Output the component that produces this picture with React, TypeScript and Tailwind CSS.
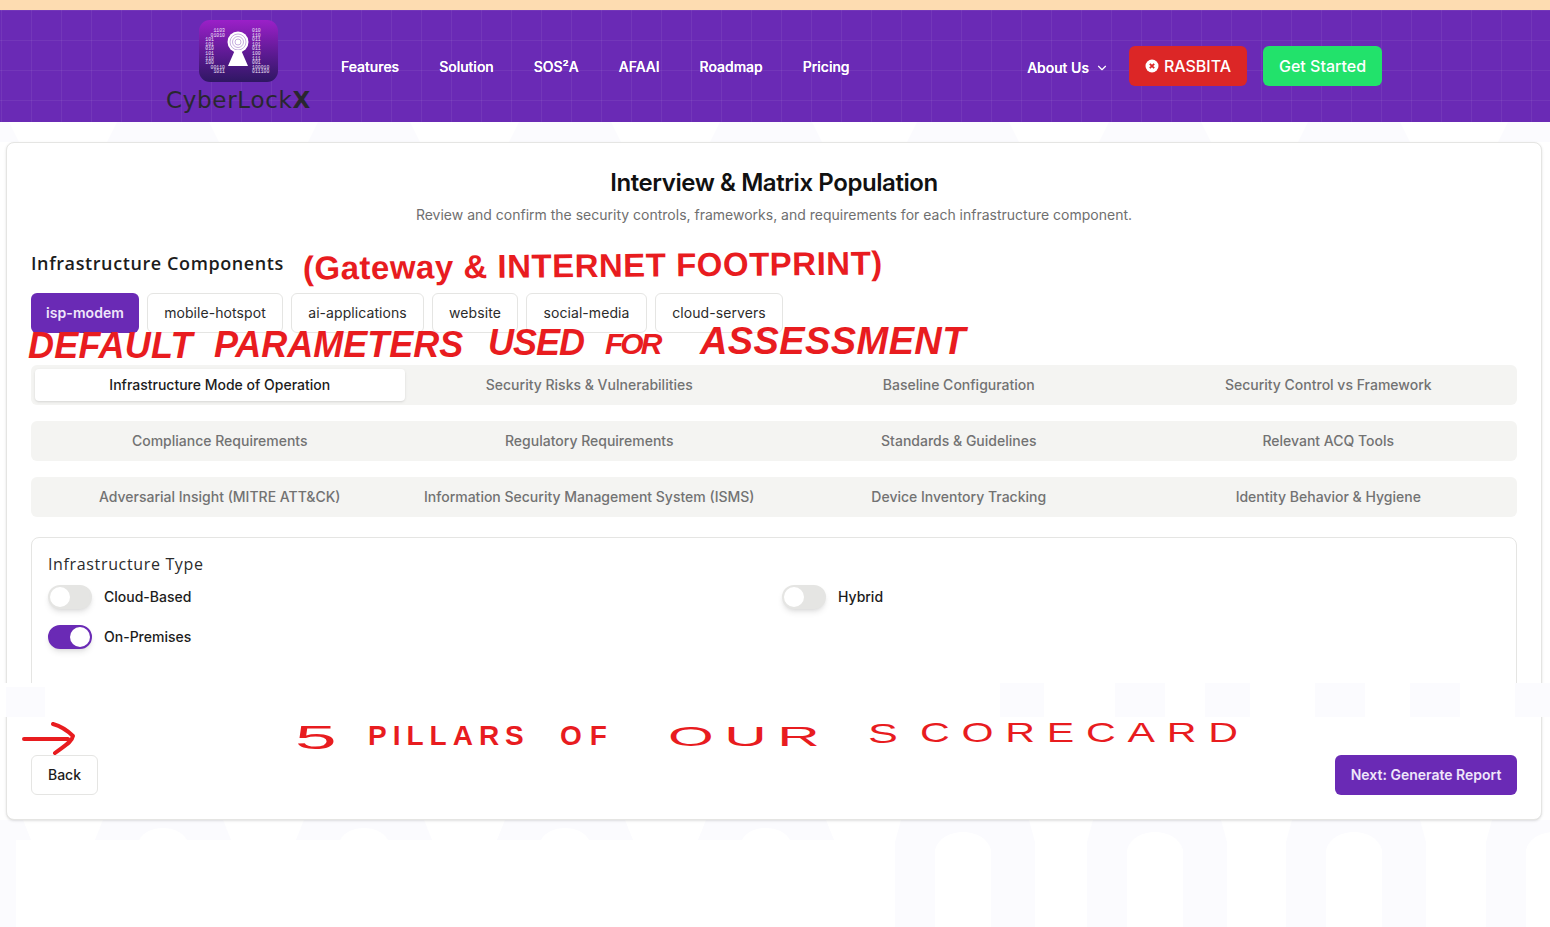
import React from 'react';
import { ChevronDown } from 'lucide-react';

const navLinks = ['Features', 'Solution', 'SOS²A', 'AFAAI', 'Roadmap', 'Pricing'];
const components = [
  { name: 'isp-modem', width: 'w-[108px]' },
  { name: 'mobile-hotspot', width: 'w-[136px]' },
  { name: 'ai-applications', width: 'w-[133px]' },
  { name: 'website', width: 'w-[86px]' },
  { name: 'social-media', width: 'w-[121px]' },
  { name: 'cloud-servers', width: 'w-[128px]' },
];
const tabRows = [
  ['Infrastructure Mode of Operation', 'Security Risks & Vulnerabilities', 'Baseline Configuration', 'Security Control vs Framework'],
  ['Compliance Requirements', 'Regulatory Requirements', 'Standards & Guidelines', 'Relevant ACQ Tools'],
  ['Adversarial Insight (MITRE ATT&CK)', 'Information Security Management System (ISMS)', 'Device Inventory Tracking', 'Identity Behavior & Hygiene'],
];

const binaryLeft = ['1103', '01010', '101', '101', '010', '101', '110', '100', '00110', '1011'];
const binaryRight = ['010', '110', '011', '101', '011', '100', '111', '001', '100010', '011100'];

function Logo() {
  return (
    <div className="flex flex-col items-center w-[143px] pt-[10px]">
      <svg width="81" height="62" viewBox="0 0 81 62" className="ml-[2px]">
        <defs>
          <linearGradient id="logoFill" x1="0" y1="0" x2="0" y2="1">
            <stop offset="0" stopColor="#9b20c8" />
            <stop offset="0.55" stopColor="#5c1a92" />
            <stop offset="1" stopColor="#2f1763" />
          </linearGradient>
        </defs>
        <rect width="79" height="62" rx="11" fill="url(#logoFill)" />
        {binaryLeft.map((row, i) => (
          <text
            key={i}
            x={i < 2 || i > 7 ? 26 : 15}
            y={12 + i * 4.6}
            textAnchor="end"
            fontSize="4.8"
            fill="#efe4f8"
            fontFamily="Liberation Mono, monospace"
          >
            {row}
          </text>
        ))}
        {binaryRight.map((row, i) => (
          <text key={i} x="53" y={12 + i * 4.6} fontSize="4.8" fill="#efe4f8" fontFamily="Liberation Mono, monospace">
            {row}
          </text>
        ))}
        <circle cx="39" cy="22" r="10.500" fill="#fff" />
        <circle cx="39" cy="22" r="8" fill="none" stroke="#b79ad6" strokeWidth="0.8" />
        <circle cx="39" cy="22" r="5.500" fill="none" stroke="#b79ad6" strokeWidth="0.8" />
        <circle cx="39" cy="22" r="3" fill="none" stroke="#b79ad6" strokeWidth="0.8" />
        <path d="M36 30 L42 30 L49 46 L29 46 Z" fill="#fff" />
      </svg>
      <div className="mt-[4px] font-['DejaVu_Sans',sans-serif] text-[23px] leading-[28px] tracking-[0.7px] text-[#29272f] whitespace-nowrap">
        CyberLock<span className="font-bold">X</span>
      </div>
    </div>
  );
}

function Switch({ on }: { on?: boolean }) {
  return (
    <span className={`flex items-center w-[44px] h-[24px] rounded-full border-2 shadow-md ${on ? 'bg-[#6a2ab5] border-[#6a2ab5] justify-end' : 'bg-[#e5e5e3] border-[#e5e5e3] justify-start'}`}>
      <span className="block w-[20px] h-[20px] rounded-full bg-white" />
    </span>
  );
}

function Backdrop() {
  const tops = [-105, 95, 296, 497, 698];
  const tall = [895, 1087, 1286, 1486];
  return (
    <svg className="absolute top-0 left-0 w-[1550px] h-[927px]" viewBox="0 0 1550 927">
      <g fill="#fbfbfe">
        {[...tops, ...tall].map((x) => (
          <path key={x} d={`M${x + 22} 122 L${x + 114} 122 L${x + 124} 142 L${x + 12} 142 Z`} />
        ))}
        {tops.map((x) => (
          <path key={x} d={`M${x + 8} 820 L${x + 128} 820 L${x + 136} 840 L${x + 92} 840 C${x + 84} 824 ${x + 52} 824 ${x + 44} 840 L${x} 840 Z`} />
        ))}
        {tall.map((x) => (
          <path key={x} d={`M${x + 6} 820 L${x + 134} 820 L${x + 140} 842 L${x + 140} 927 L${x + 96} 927 L${x + 96} 850 C${x + 90} 826 ${x + 46} 826 ${x + 40} 850 L${x + 40} 927 L${x} 927 L${x} 842 Z`} />
        ))}
        <rect x="0" y="840" width="16" height="87" />
      </g>
    </svg>
  );
}

export default function App() {
  return (
    <div className="relative min-h-[927px] bg-white overflow-hidden font-['Inter',sans-serif] text-[#1c1c1c]">
      <Backdrop />

      <div className="relative">
        <div className="h-[10px] bg-[#fddcb1]" />
        <header className="flex items-start h-[112px] pl-[167px] pr-[168px] bg-[#6a2ab5] bg-[linear-gradient(rgba(255,255,255,0.06)_1px,transparent_1px),linear-gradient(90deg,rgba(255,255,255,0.06)_1px,transparent_1px)] bg-[size:30px_30px] bg-[position:1px_0px]">
          <Logo />
          <nav className="flex items-center gap-10 ml-[31px] h-[114px] text-sm font-medium text-white [text-shadow:0_0_0.5px_#fff]">
            {navLinks.map((link) => (
              <a key={link}>{link}</a>
            ))}
          </nav>
          <div className="flex items-center ml-auto h-[112px]">
            <span className="flex items-center gap-[6px] mr-[20px] mt-[4px] text-sm font-medium text-white [text-shadow:0_0_0.5px_#fff]">
              About Us <ChevronDown size={14} />
            </span>
            <button className="flex items-center justify-center gap-[5px] w-[118px] h-[40px] rounded-md bg-[#dc2626] text-white font-medium">
              <svg width="14" height="14" viewBox="0 0 14 14">
                <circle cx="7" cy="7" r="6.500" fill="#fff" />
                <path d="M4.800 4.800 L9.200 9.200 M9.200 4.800 L4.800 9.200" stroke="#dc2626" strokeWidth="1.800" />
              </svg>
              RASBITA
            </button>
            <button className="ml-4 w-[119px] h-[40px] rounded-md bg-[#22e26b] text-white font-medium">Get Started</button>
          </div>
        </header>

        <main className="mt-5 ml-[6px] w-[1536px] h-[678px] px-6 pt-6 bg-white border border-[#e5e5e3] rounded-lg shadow-sm">
          <h1 className="text-center text-2xl leading-8 font-semibold tracking-[-0.42px] text-[#111]">Interview & Matrix Population</h1>
          <p className="mt-[6px] text-center text-sm leading-5 text-[#6f6f6f]">
            Review and confirm the security controls, frameworks, and requirements for each infrastructure component.
          </p>

          <h2 className="mt-[24px] font-['Open_Sans',sans-serif] text-[18px] leading-7 font-semibold tracking-[0.6px] text-[#1c1c1c]">Infrastructure Components</h2>

          <div className="flex gap-2 mt-4">
            {components.map(({ name, width }, i) => (
              <button
                key={name}
                className={`h-[40px] rounded-md text-sm tracking-[0.07px] ${width} ${i === 0 ? 'bg-[#6a2ab5] text-[#efe6fa] font-semibold' : 'bg-white border border-[#e5e5e3] text-[#2b2b2b]'}`}
              >
                {name}
              </button>
            ))}
          </div>

          <div className="flex flex-col gap-4 mt-8">
            {tabRows.map((row, r) => (
              <div key={r} className="grid grid-cols-4 h-[40px] p-1 rounded-md bg-[#f4f4f2]">
                {row.map((tab, t) => (
                  <div
                    key={tab}
                    className={`flex items-center justify-center rounded-[4px] text-sm font-medium whitespace-nowrap ${r === 0 && t === 0 ? 'bg-white text-[#1c1c1c] shadow-sm' : 'text-[#727272]'}`}
                  >
                    {tab}
                  </div>
                ))}
              </div>
            ))}
          </div>

          <section className="mt-5 h-[170px] px-4 pt-[14px] border border-[#e5e5e3] rounded-lg">
            <h3 className="font-['Open_Sans',sans-serif] leading-6 tracking-[0.65px] text-[#2b2b2b]">Infrastructure Type</h3>
            <div className="grid grid-cols-2 gap-x-4 gap-y-4 mt-[9px]">
              <label className="flex items-center gap-3 text-sm font-medium"><Switch /> Cloud-Based</label>
              <label className="flex items-center gap-3 text-sm font-medium"><Switch /> Hybrid</label>
              <label className="flex items-center gap-3 text-sm font-medium"><Switch on /> On-Premises</label>
            </div>
          </section>

          <div className="flex justify-between mt-[48px]">
            <button className="w-[67px] h-[40px] bg-white border border-[#e5e5e3] rounded-md text-sm font-medium">Back</button>
            <button className="w-[182px] h-[40px] bg-[#6a2ab5] rounded-md text-sm font-semibold text-[#efe6fa]">Next: Generate Report</button>
          </div>
        </main>
      </div>

      {/* cut-out band over the page */}
      <div className="absolute top-[683px] left-0 w-[1550px] h-[34px] bg-white">
        <svg width="1550" height="34" viewBox="0 0 1550 34">
          <g fill="#fbfbfe">
            <rect x="6" y="4" width="39" height="30" />
            <rect x="1000" y="0" width="44" height="34" />
            <rect x="1115" y="0" width="50" height="34" />
            <rect x="1205" y="0" width="45" height="34" />
            <rect x="1315" y="0" width="50" height="34" />
            <rect x="1410" y="0" width="50" height="34" />
            <rect x="1515" y="0" width="35" height="34" />
          </g>
        </svg>
      </div>

      {/* hand written notes on top of the screenshot */}
      <div className="absolute inset-0 font-['Liberation_Sans',sans-serif] font-bold text-[#e81c1f] whitespace-nowrap">
        <span className="absolute left-[303px] top-[245px] text-[33px] leading-[42px] tracking-[0.5px] -rotate-[0.5deg]">(Gateway &amp; INTERNET FOOTPRINT)</span>
        <span className="absolute left-[28px] top-[330px] text-[36px] leading-[32px] tracking-[0.2px] italic">DEFAULT</span>
        <span className="absolute left-[214px] top-[329px] text-[36px] leading-[32px] italic">PARAMETERS</span>
        <span className="absolute left-[488px] top-[327px] text-[36px] leading-[32px] tracking-[-1px] italic">USED</span>
        <span className="absolute left-[605px] top-[328px] text-[30px] leading-[32px] tracking-[-3px] italic">FOR</span>
        <span className="absolute left-[700px] top-[325px] text-[38px] leading-[32px] tracking-[0.4px] italic">ASSESSMENT</span>

        <span className="absolute left-[295px] top-[722px] text-[34px] leading-[30px] font-normal origin-left scale-x-[2.2]">5</span>
        <span className="absolute left-[368px] top-[721px] text-[28px] leading-[30px] tracking-[6px]">PILLARS</span>
        <span className="absolute left-[560px] top-[721px] text-[28px] leading-[30px] tracking-[8px]">OF</span>
        <span className="absolute left-[668px] top-[722px] text-[28px] leading-[30px] font-normal tracking-[5px] origin-left scale-x-[2.1]">OUR</span>
        <span className="absolute left-[868px] top-[719px] text-[28px] leading-[30px] font-normal origin-left scale-x-[1.6]">S</span>
        <span className="absolute left-[920px] top-[718px] text-[28px] leading-[30px] font-normal tracking-[8px] origin-left scale-x-[1.47]">CORECARD</span>
        <svg className="absolute left-[22px] top-[722px]" width="54" height="34" viewBox="0 0 54 34">
          <path d="M2 17 L46 17 M31 2 C38 4 45 8 51 14 C50 20 42 24 33 31" fill="none" stroke="#e81c1f" strokeWidth="4" strokeLinecap="round" strokeLinejoin="round" />
        </svg>
      </div>
    </div>
  );
}
